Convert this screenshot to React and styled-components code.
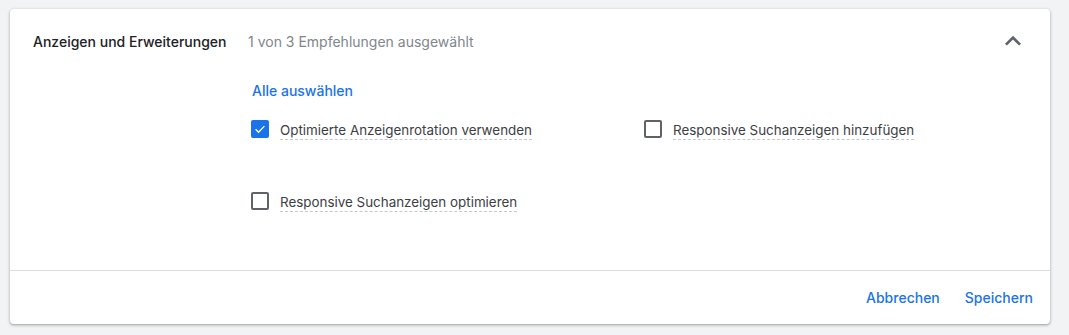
import React, { useState } from "react";
import styled, { createGlobalStyle } from "styled-components";

const GlobalStyle = createGlobalStyle`
  body {
    margin: 0;
    background: #f1f3f4;
    font-family: Inter, Roboto, "Noto Sans", Arial, sans-serif;
    -webkit-font-smoothing: antialiased;
  }
`;

const Page = styled.div`
  padding: 9px 19px 12px 10px;
`;

const Card = styled.div`
  background: #fff;
  border-radius: 4px;
  box-shadow: 0 1px 2px rgba(60, 64, 67, 0.3), 0 1px 3px 1px rgba(60, 64, 67, 0.15);
`;

const Header = styled.div`
  display: flex;
  align-items: center;
  height: 64px;
  padding: 0 21px 0 23px;
`;

const Title = styled.div`
  width: 215px;
  font-size: 14px;
  font-weight: 500;
  color: #202124;
`;

const Subtitle = styled.div`
  flex: 1;
  font-size: 14px;
  color: #80868b;
`;

const ToggleButton = styled.button`
  display: flex;
  align-items: center;
  justify-content: center;
  width: 32px;
  height: 32px;
  padding: 0;
  border: none;
  background: none;
  cursor: pointer;
  color: #5f6368;
`;

const Body = styled.div`
  padding: 8px 0 51px 241px;
`;

const SelectAll = styled.button`
  display: block;
  padding: 0 1px;
  border: none;
  background: none;
  font-family: inherit;
  font-size: 14px;
  font-weight: 500;
  line-height: 20px;
  color: #1a73e8;
  cursor: pointer;
  margin-bottom: 10px;
`;

const OptionGrid = styled.div`
  display: grid;
  grid-template-columns: 393px 393px;
  row-gap: 36px;
`;

const Option = styled.label`
  display: flex;
  align-items: center;
  gap: 11px;
  height: 36px;
  cursor: pointer;
`;

const Box = styled.span`
  box-sizing: border-box;
  display: flex;
  align-items: center;
  justify-content: center;
  width: 18px;
  height: 18px;
  border-radius: 2px;
  border: 2px solid ${({ checked }) => (checked ? "#1a73e8" : "#5f6368")};
  background: ${({ checked }) => (checked ? "#1a73e8" : "#fff")};
`;

const Label = styled.span`
  font-size: 13.4px;
  line-height: 18px;
  color: #3c4043;
  border-bottom: 1px dashed #c6c9cc;
  padding-top: 2px;
`;

const Footer = styled.div`
  display: flex;
  justify-content: flex-end;
  align-items: center;
  gap: 9px;
  height: 52px;
  padding: 0 9px 1px 0;
  border-top: 1px solid #dadce0;
`;

const TextButton = styled.button`
  padding: 0 8px;
  height: 36px;
  border: none;
  background: none;
  font-family: inherit;
  font-size: 14px;
  font-weight: 500;
  color: #1a73e8;
  cursor: pointer;
`;

const options = [
  "Optimierte Anzeigenrotation verwenden",
  "Responsive Suchanzeigen hinzufügen",
  "Responsive Suchanzeigen optimieren",
];

const App = () => {
  const [selected, setSelected] = useState([true, false, false]);
  const count = selected.filter(Boolean).length;

  const toggle = (i) =>
    setSelected((s) => s.map((v, idx) => (idx === i ? !v : v)));

  return (
    <>
      <GlobalStyle />
      <Page>
        <Card>
          <Header>
            <Title>Anzeigen und Erweiterungen</Title>
            <Subtitle>
              {count} von {options.length} Empfehlungen ausgewählt
            </Subtitle>
            <ToggleButton aria-label="Einklappen">
              <svg width="32" height="32" viewBox="0 0 24 24" fill="currentColor">
                <path d="M12 8l-6 6 1.41 1.41L12 10.83l4.59 4.58L18 14z" />
              </svg>
            </ToggleButton>
          </Header>
          <Body>
            <SelectAll onClick={() => setSelected(options.map(() => true))}>
              Alle auswählen
            </SelectAll>
            <OptionGrid>
              {options.map((text, i) => (
                <Option key={text} onClick={() => toggle(i)}>
                  <Box checked={selected[i]}>
                    {selected[i] && (
                      <svg width="14" height="14" viewBox="0 0 24 24">
                        <path
                          d="M4.5 12.5l5 5L19.5 7"
                          fill="none"
                          stroke="#fff"
                          strokeWidth="2.2"
                        />
                      </svg>
                    )}
                  </Box>
                  <Label>{text}</Label>
                </Option>
              ))}
            </OptionGrid>
          </Body>
          <Footer>
            <TextButton>Abbrechen</TextButton>
            <TextButton>Speichern</TextButton>
          </Footer>
        </Card>
      </Page>
    </>
  );
};

export default App;
